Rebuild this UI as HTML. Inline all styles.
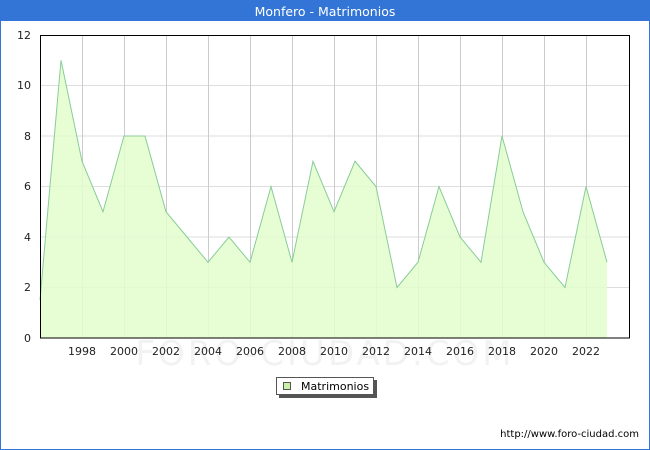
<!DOCTYPE html>
<html><head><meta charset="utf-8"><style>
html,body{margin:0;padding:0;width:650px;height:450px;overflow:hidden;background:#fff;font-family:"DejaVu Sans","Liberation Sans",sans-serif}
</style></head><body>
<svg width="650" height="450" xmlns="http://www.w3.org/2000/svg" font-family="DejaVu Sans, Liberation Sans, sans-serif">
<rect x="0" y="0" width="650" height="450" fill="#3375d6"/>
<rect x="1" y="21" width="648" height="428" fill="#fff"/>
<text x="325" y="16" fill="#fff" font-size="12.5" text-anchor="middle">Monfero - Matrimonios</text>
<g stroke="#dddddd" stroke-width="1">
<line x1="40" y1="287.5" x2="630" y2="287.5"/><line x1="40" y1="237" x2="630" y2="237"/><line x1="40" y1="186.5" x2="630" y2="186.5"/><line x1="40" y1="136" x2="630" y2="136"/><line x1="40" y1="85.5" x2="630" y2="85.5"/>
</g>
<g stroke="#cccccc" stroke-width="1">
<line x1="82.5" y1="35" x2="82.5" y2="338"/><line x1="124.5" y1="35" x2="124.5" y2="338"/><line x1="166.5" y1="35" x2="166.5" y2="338"/><line x1="208.5" y1="35" x2="208.5" y2="338"/><line x1="250.5" y1="35" x2="250.5" y2="338"/><line x1="292.5" y1="35" x2="292.5" y2="338"/><line x1="334.5" y1="35" x2="334.5" y2="338"/><line x1="376.5" y1="35" x2="376.5" y2="338"/><line x1="418.5" y1="35" x2="418.5" y2="338"/><line x1="460.5" y1="35" x2="460.5" y2="338"/><line x1="502.5" y1="35" x2="502.5" y2="338"/><line x1="544.5" y1="35" x2="544.5" y2="338"/><line x1="586.5" y1="35" x2="586.5" y2="338"/>
</g>
<polygon fill="#e3fdcd" fill-opacity="0.85" stroke="none" points="40,338 40,300 61,60.25 82,161.25 103,211.75 124,136 145,136 166,211.75 187,237 208,262.25 229,237 250,262.25 271,186.5 292,262.25 313,161.25 334,211.75 355,161.25 376,186.5 397,287.5 418,262.25 439,186.5 460,237 481,262.25 502,136 523,211.75 544,262.25 565,287.5 586,186.5 607,262.25 607,338"/>
<polyline fill="none" stroke="#88cc99" stroke-width="1" points="40,300 61,60.25 82,161.25 103,211.75 124,136 145,136 166,211.75 187,237 208,262.25 229,237 250,262.25 271,186.5 292,262.25 313,161.25 334,211.75 355,161.25 376,186.5 397,287.5 418,262.25 439,186.5 460,237 481,262.25 502,136 523,211.75 544,262.25 565,287.5 586,186.5 607,262.25"/>
<text x="325" y="365" fill="#f2f2f2" font-size="34" text-anchor="middle" letter-spacing="3">FORO-CIUDAD.COM</text>
<rect x="40.5" y="35.5" width="589" height="302.5" fill="none" stroke="#000" stroke-width="1"/>
<g font-size="11" fill="#222" text-anchor="end">
<text x="31" y="342">0</text><text x="31" y="291">2</text><text x="31" y="241">4</text><text x="31" y="190">6</text><text x="31" y="140">8</text><text x="31" y="89">10</text><text x="31" y="39">12</text>
</g>
<g font-size="11" fill="#222" text-anchor="middle">
<text x="82" y="355">1998</text><text x="124" y="355">2000</text><text x="166" y="355">2002</text><text x="208" y="355">2004</text><text x="250" y="355">2006</text><text x="292" y="355">2008</text><text x="334" y="355">2010</text><text x="376" y="355">2012</text><text x="418" y="355">2014</text><text x="460" y="355">2016</text><text x="502" y="355">2018</text><text x="544" y="355">2020</text><text x="586" y="355">2022</text>
</g>
<rect x="279" y="380" width="98" height="18" fill="#555"/>
<rect x="276.5" y="377.5" width="97" height="17" fill="#fff" stroke="#555"/>
<rect x="283.5" y="382.5" width="7" height="7" fill="#c8f0a8" stroke="#555"/>
<text x="301" y="390" font-size="11" fill="#000">Matrimonios</text>
<text x="639" y="437" font-size="10" fill="#000" text-anchor="end">http://www.foro-ciudad.com</text>
</svg>
</body></html>
